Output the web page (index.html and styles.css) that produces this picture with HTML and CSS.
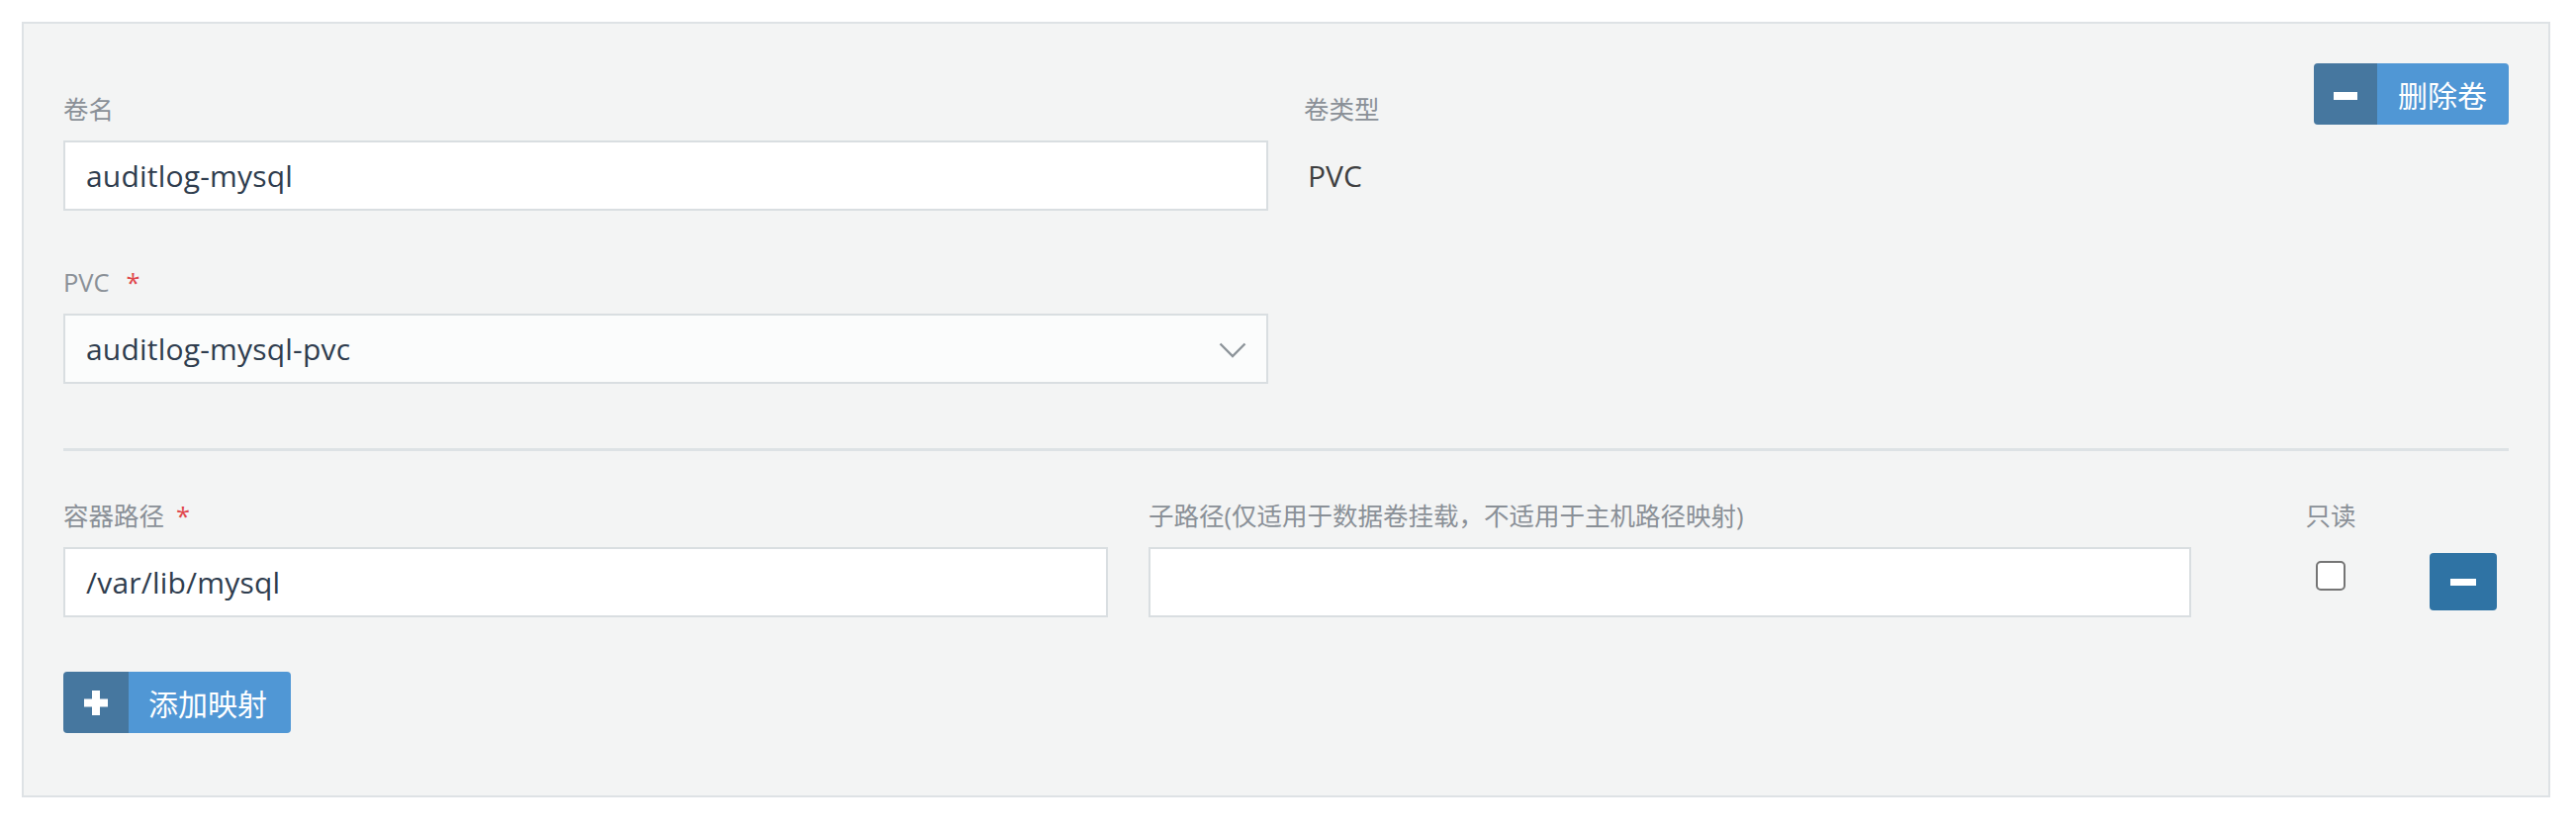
FILE: index.html
```html
<!DOCTYPE html>
<html lang="zh-CN">
<head>
<meta charset="utf-8">
<title>Volume</title>
<link rel="stylesheet" href="styles.css">
</head>
<body>
<div class="panel">
  <div class="head-row">
    <div class="field name-col">
      <label class="lbl">卷名</label>
      <div class="input">auditlog-mysql</div>
    </div>
    <div class="field type-col">
      <label class="lbl">卷类型</label>
      <div class="static">PVC</div>
    </div>
    <button class="btn-split remove-vol" type="button">
      <span class="ico"><span class="minus-bar"></span></span>
      <span class="txt">删除卷</span>
    </button>
  </div>

  <div class="field pvc-field">
    <label class="lbl">PVC<span class="req req-pvc">*</span></label>
    <div class="input select">
      <span>auditlog-mysql-pvc</span>
      <svg class="chev" width="28" height="16" viewBox="0 0 28 16"><polyline points="1.5,1.5 14,14 26.5,1.5" fill="none" stroke="#8d949a" stroke-width="2.4"/></svg>
    </div>
  </div>

  <div class="sep"></div>

  <div class="mount-row">
    <div class="field c-path">
      <label class="lbl">容器路径<span class="req">*</span></label>
      <div class="input">/var/lib/mysql</div>
    </div>
    <div class="field c-sub">
      <label class="lbl">子路径(仅适用于数据卷挂载，不适用于主机路径映射)</label>
      <div class="input"></div>
    </div>
    <div class="field c-ro">
      <label class="lbl">只读</label>
      <input class="chk" type="checkbox">
    </div>
    <div class="field c-act">
      <label class="lbl">&nbsp;</label>
      <button class="btn-rm" type="button"><span class="rm-bar"></span></button>
    </div>
  </div>

  <button class="btn-split add-map" type="button">
    <span class="ico">
      <svg width="24" height="25" viewBox="0 0 24 25"><rect x="8" y="0" width="8" height="25" fill="#fff"/><rect x="0" y="8.5" width="24" height="8" fill="#fff"/></svg>
    </span>
    <span class="txt">添加映射</span>
  </button>
</div>
</body>
</html>
```

FILE: styles.css
```css
html, body {
  margin: 0;
  padding: 0;
  background: #ffffff;
}

body {
  font-family: "Open Sans", "Noto Sans CJK SC", sans-serif;
}

.panel {
  margin: 22px 0 0 22px;
  width: 2556px;
  box-sizing: border-box;
  border: 2px solid #dee2e5;
  background: #f3f4f4;
  padding: 40px 40px 63px;
}

.field {
  display: flex;
  flex-direction: column;
}

.head-row {
  display: flex;
  align-items: flex-start;
}

.name-col {
  width: 1218px;
  margin-top: 28px;
}

.type-col {
  flex: 1;
  margin-left: 36px;
  margin-top: 28px;
}

.lbl {
  display: block;
  font-size: 25.5px;
  line-height: 36px;
  height: 36px;
  color: #8a9097;
  margin-bottom: 14px;
  white-space: nowrap;
}

.req {
  color: #e0474c;
  margin-left: 12px;
}

.req-pvc {
  margin-left: 17px;
}

.input {
  height: 71px;
  box-sizing: border-box;
  border: 2px solid #d9dee1;
  background: #ffffff;
  padding: 0 21px;
  font-size: 30px;
  letter-spacing: 0.2px;
  color: #2f3d4e;
  display: flex;
  align-items: center;
  white-space: nowrap;
}

.select {
  background: #fbfcfc;
  justify-content: space-between;
  padding-right: 20px;
}

.chev {
  display: block;
  margin-top: 2px;
}

.static {
  height: 71px;
  line-height: 71px;
  font-size: 30px;
  color: #3e3f40;
  padding-left: 4px;
}

.btn-split {
  display: inline-flex;
  align-items: stretch;
  align-self: flex-start;
  height: 62px;
  border: 0;
  padding: 0;
  margin: 0;
  border-radius: 4px;
  overflow: hidden;
  font-family: "Open Sans", "Noto Sans CJK SC", sans-serif;
  cursor: pointer;
  flex: none;
}

.btn-split .ico {
  width: 64px;
  background: #46779f;
  display: flex;
  align-items: center;
  justify-content: center;
}

.btn-split .txt {
  background: #5097d5;
  color: #ffffff;
  font-size: 30px;
  padding: 0 22px 0 21px;
  display: flex;
  align-items: center;
}

.minus-bar {
  display: block;
  width: 24px;
  height: 8px;
  background: #ffffff;
  margin-top: 4px;
}

.pvc-field {
  width: 1218px;
  margin-top: 54px;
}

.sep {
  margin-top: 65px;
  height: 3px;
  background: #dde2e5;
}

.mount-row {
  display: flex;
  margin-top: 47px;
}

.c-path {
  width: 1056px;
}

.c-sub {
  width: 1054px;
  margin-left: 41px;
}

.c-ro {
  width: 200px;
  margin-left: 41px;
  text-align: center;
}

.c-act {
  width: 80px;
}

.chk {
  appearance: none;
  -webkit-appearance: none;
  display: block;
  width: 30px;
  height: 30px;
  box-sizing: border-box;
  border: 2px solid #757575;
  border-radius: 5px;
  background: #ffffff;
  margin: 14px auto 0;
}

.btn-rm {
  display: flex;
  align-items: center;
  justify-content: center;
  width: 68px;
  height: 58px;
  margin-top: 6px;
  padding: 0;
  border: 0;
  border-radius: 4px;
  background: #2f73a4;
  cursor: pointer;
}

.rm-bar {
  display: block;
  width: 26px;
  height: 7px;
  background: #ffffff;
}

.add-map {
  margin-top: 55px;
}

.add-map .ico {
  width: 66px;
}

.add-map .txt {
  padding: 0 24px 0 20px;
}
```
